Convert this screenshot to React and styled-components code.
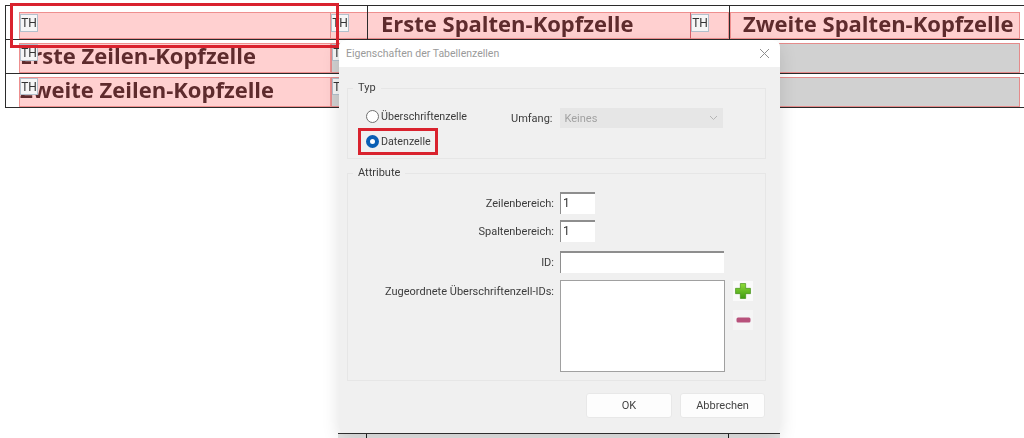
import React from 'react';
import styled, { createGlobalStyle } from 'styled-components';

const GlobalStyle = createGlobalStyle`
	html, body {
		margin: 0;
		padding: 0;
		background: #fff;
		overflow: hidden;
	}
	body {
		font-family: Roboto, "Open Sans", sans-serif;
	}
`;

const Page = styled.div`
	position: relative;
	width: 1024px;
	height: 438px;
	overflow: hidden;
	filter: blur(0.35px);
`;

const Table = styled.div`
	margin: 5px 0 0 5px;
	border-top: 1px solid #2b2b2b;
	border-left: 1px solid #2b2b2b;
`;

const Row = styled.div`
	display: grid;
	grid-template-columns: 13px 312px 36px 323px 39px 291px 1fr;
	height: ${(p) => p.$height}px;
	border-bottom: 1px solid #2b2b2b;
`;

const Slot = styled.div`
	padding-top: ${(p) => p.$top}px;
	border-left: ${(p) => (p.$line ? '1px solid #2b2b2b' : '0')};
	min-width: 0;
`;

const Block = styled.div`
	position: relative;
	box-sizing: border-box;
	height: 100%;
	padding-left: ${(p) => p.$indent || 0}px;
	background: ${(p) => (p.$grey ? '#d1d1d1' : '#ffd0d0')};
	border: 1px solid ${(p) => (p.$grey ? '#e58b8b' : '#ee8f8f')};
	border-left: ${(p) => (p.$open ? '0' : `1px solid ${p.$edge || (p.$grey ? '#e58b8b' : '#ee8f8f')}`)};
	border-right: ${(p) => (p.$open ? '0' : `1px solid ${p.$grey ? '#e58b8b' : '#ee8f8f'}`)};
	color: #5e2b2d;
	font-family: "Open Sans", sans-serif;
	font-size: 22px;
	font-weight: 700;
	line-height: ${(p) => p.$leading}px;
	white-space: nowrap;
`;

const ThTag = styled.span`
	position: absolute;
	top: ${(p) => p.$top}px;
	left: 0;
	box-sizing: border-box;
	width: 18px;
	height: ${(p) => p.$height || 18}px;
	background: #f6f6f6;
	border: 1px solid #b3c0cc;
	color: #333;
	font-family: Roboto, sans-serif;
	font-size: 12px;
	font-weight: 400;
	line-height: 16px;
	text-align: center;
`;

const Callout = styled.div`
	position: absolute;
	left: 10px;
	top: 3px;
	box-sizing: border-box;
	width: 329px;
	height: 45px;
	border: 3px solid #d9222e;
`;

const UnderDialog = styled.div`
	position: absolute;
	left: 338px;
	top: 433px;
	width: 442px;
	height: 5px;
	display: grid;
	grid-template-columns: 29px 362px 1fr;
	border-top: 1px solid #333;
	background: #e4e4e4;
`;

const UnderCell = styled.div`
	border-right: ${(p) => (p.$line ? '1px solid #222' : '0')};
`;

const Dialog = styled.div`
	position: absolute;
	left: 339px;
	top: 40px;
	box-sizing: border-box;
	width: 441px;
	height: 393px;
	display: flex;
	flex-direction: column;
	background: #f0f0f0;
	border-radius: 7px 7px 6px 6px;
	box-shadow: 0 6px 18px rgba(0, 0, 0, 0.12);
	color: #3c3c3c;
	font-size: 11px;
	overflow: hidden;
`;

const TitleBar = styled.div`
	flex: 0 0 27px;
	display: flex;
	align-items: center;
	justify-content: space-between;
	padding: 0 10px 0 7px;
	background: #fff;
	color: #9a9a9a;
	font-size: 10.5px;
`;

const CloseIcon = styled.svg`
	width: 11px;
	height: 11px;
	stroke: #8f8f8f;
	stroke-width: 1;
	fill: none;
`;

const Body = styled.div`
	flex: 1;
	display: flex;
	flex-direction: column;
	padding: 14px 14px 14px 8px;
`;

const Group = styled.fieldset`
	box-sizing: border-box;
	height: ${(p) => p.$height}px;
	margin: 0 0 7px;
	padding: 0;
	border: 1px solid #e6e6e6;
	min-width: 0;
`;

const Legend = styled.legend`
	margin-left: 5px;
	padding: 0 5px;
	font-size: 11px;
	line-height: 14px;
`;

const TypeLayout = styled.div`
	display: flex;
	padding: 12px 0 0 10px;
`;

const RadioColumn = styled.div`
	display: flex;
	flex-direction: column;
	width: 153px;
`;

const RadioRow = styled.div`
	box-sizing: border-box;
	width: ${(p) => (p.$marked ? '80px' : 'auto')};
	height: ${(p) => (p.$marked ? '27px' : '18px')};
	margin-left: ${(p) => (p.$marked ? '0' : '8px')};
	padding-left: ${(p) => (p.$marked ? '5px' : '0')};
	margin-top: ${(p) => (p.$marked ? '3px' : '0')};
	display: flex;
	align-items: center;
	gap: 2px;
	border: ${(p) => (p.$marked ? '3px solid #d9222e' : '0')};
	font-size: 10.7px;
`;

const Radio = styled.span`
	box-sizing: border-box;
	flex: 0 0 13px;
	height: 13px;
	border-radius: 50%;
	background: #fff;
	border: ${(p) => (p.$checked ? '4px solid #0a5fb4' : '1px solid #707070')};
`;

const ScopeRow = styled.div`
	display: flex;
	align-items: center;
	gap: 7px;
	height: 20px;
	margin-top: 1px;
`;

const Select = styled.div`
	box-sizing: border-box;
	width: 163px;
	height: 20px;
	padding: 0 5px;
	display: flex;
	align-items: center;
	justify-content: space-between;
	background: #e6e6e6;
	color: #a2a2a2;
`;

const FormGrid = styled.div`
	display: grid;
	grid-template-columns: 206px auto 1fr;
	column-gap: 6px;
	align-items: start;
	padding-top: 12px;
`;

const FieldLabel = styled.div`
	grid-column: 1;
	height: 22px;
	margin-top: ${(p) => p.$top || 0}px;
	text-align: right;
	line-height: 24px;
`;

const FieldBox = styled.div`
	grid-column: 2 / 4;
	box-sizing: border-box;
	width: ${(p) => p.$width}px;
	height: ${(p) => p.$height || 22}px;
	margin-top: ${(p) => p.$top || 0}px;
	padding-left: 2px;
	background: #fff;
	border-top: 2px solid #8e8e8e;
	border-left: 1px solid #8e8e8e;
	line-height: 19px;
	color: #333;
	font-size: 12px;
`;

const ListRow = styled.div`
	grid-column: 2 / 4;
	display: flex;
	gap: 8px;
	margin-top: 7px;
`;

const ListBox = styled.div`
	box-sizing: border-box;
	width: 165px;
	height: 92px;
	background: #fff;
	border: 1px solid #a0a0a0;
`;

const IconColumn = styled.div`
	display: flex;
	flex-direction: column;
	gap: 9px;
	padding-top: 1px;
`;

const IconButton = styled.div`
	width: 20px;
	height: 20px;
	display: flex;
	align-items: center;
	justify-content: center;
	background: ${(p) => p.$bg};
`;

const Footer = styled.div`
	display: flex;
	justify-content: flex-end;
	gap: 8px;
	margin-top: 5px;
	padding-right: 1px;
`;

const Button = styled.div`
	width: ${(p) => p.$width}px;
	height: 25px;
	background: #fdfdfd;
	border: 1px solid #e8e8e8;
	border-radius: 3px;
	box-sizing: border-box;
	text-align: center;
	line-height: 23px;
	font-size: 11px;
	color: #444;
`;

const rows = [
	{ height: 33, top: 6, leading: 20, label: '', tagTop: 1, tagHeight: 18 },
	{ height: 33, top: 3, leading: 22, label: 'Erste Zeilen-Kopfzelle', tagTop: 0, tagHeight: 17 },
	{ height: 33, top: 3, leading: 22, label: 'Zweite Zeilen-Kopfzelle', tagTop: 0, tagHeight: 17 }
];

function TableRow({ row, index }) {
	const head = index === 0;
	return (
		<Row $height={row.height}>
			<Slot $top={row.top} />
			<Slot $top={row.top}>
				<Block $leading={row.leading}>
					{row.label}
					<ThTag $top={row.tagTop} $height={row.tagHeight}>TH</ThTag>
				</Block>
			</Slot>
			<Slot $top={row.top}>
				<Block $grey={!head} $open={head} $leading={row.leading}>
					<ThTag $top={row.tagTop} $height={row.tagHeight}>TH</ThTag>
				</Block>
			</Slot>
			<Slot $top={row.top} $line>
				<Block $grey={!head} $open={head} $indent={13} $leading={row.leading}>
					{head && 'Erste Spalten-Kopfzelle'}
				</Block>
			</Slot>
			<Slot $top={row.top}>
				<Block $grey={!head} $edge={head ? '#d9606a' : undefined} $leading={row.leading}>
					{head && <ThTag $top={row.tagTop}>TH</ThTag>}
				</Block>
			</Slot>
			<Slot $top={row.top} $line>
				<Block $grey={!head} $indent={12} $leading={row.leading}>
					{head && 'Zweite Spalten-Kopfzelle'}
				</Block>
			</Slot>
			<Slot $top={row.top} />
		</Row>
	);
}

export default function App() {
	return (
		<Page>
			<GlobalStyle />
			<Table>
				{rows.map((row, i) => (
					<TableRow key={i} row={row} index={i} />
				))}
			</Table>
			<Callout />
			<UnderDialog>
				<UnderCell $line />
				<UnderCell $line />
				<UnderCell />
			</UnderDialog>
			<Dialog>
				<TitleBar>
					<span>Eigenschaften der Tabellenzellen</span>
					<CloseIcon viewBox="0 0 11 11">
						<path d="M1 1 L10 10 M10 1 L1 10" />
					</CloseIcon>
				</TitleBar>
				<Body>
					<Group $height={78}>
						<Legend>Typ</Legend>
						<TypeLayout>
							<RadioColumn>
								<RadioRow>
									<Radio />
									Überschriftenzelle
								</RadioRow>
								<RadioRow $marked>
									<Radio $checked />
									Datenzelle
								</RadioRow>
							</RadioColumn>
							<ScopeRow>
								<span>Umfang:</span>
								<Select>
									Keines
									<svg width="9" height="6" viewBox="0 0 9 6" fill="none" stroke="#b5b5b5">
										<path d="M1 1 L4.5 4.5 L8 1" />
									</svg>
								</Select>
							</ScopeRow>
						</TypeLayout>
					</Group>
					<Group $height={215}>
						<Legend>Attribute</Legend>
						<FormGrid>
							<FieldLabel>Zeilenbereich:</FieldLabel>
							<FieldBox $width={35}>1</FieldBox>
							<FieldLabel $top={6}>Spaltenbereich:</FieldLabel>
							<FieldBox $width={35} $top={6}>1</FieldBox>
							<FieldLabel $top={9}>ID:</FieldLabel>
							<FieldBox $width={164} $top={9} />
							<FieldLabel $top={7}>Zugeordnete Überschriftenzell-IDs:</FieldLabel>
							<ListRow>
								<ListBox />
								<IconColumn>
									<IconButton $bg="#fafafa">
										<svg width="16" height="16" viewBox="0 0 15 15">
											<defs>
												<linearGradient id="plusFill" x1="0" y1="0" x2="0" y2="1">
													<stop offset="0" stopColor="#8fdc3a" />
													<stop offset="1" stopColor="#3f9a12" />
												</linearGradient>
											</defs>
											<path d="M5 0.5 H10 V5 H14.5 V10 H10 V14.5 H5 V10 H0.5 V5 H5 Z" fill="url(#plusFill)" stroke="#3c8a10" strokeWidth="0.6" />
										</svg>
									</IconButton>
									<IconButton $bg="#f5f5f5">
										<svg width="15" height="6" viewBox="0 0 15 6">
											<rect x="0.5" y="0.5" width="14" height="5" rx="1.5" fill="#b8527c" />
										</svg>
									</IconButton>
								</IconColumn>
							</ListRow>
						</FormGrid>
					</Group>
					<Footer>
						<Button $width={86}>OK</Button>
						<Button $width={85}>Abbrechen</Button>
					</Footer>
				</Body>
			</Dialog>
		</Page>
	);
}
